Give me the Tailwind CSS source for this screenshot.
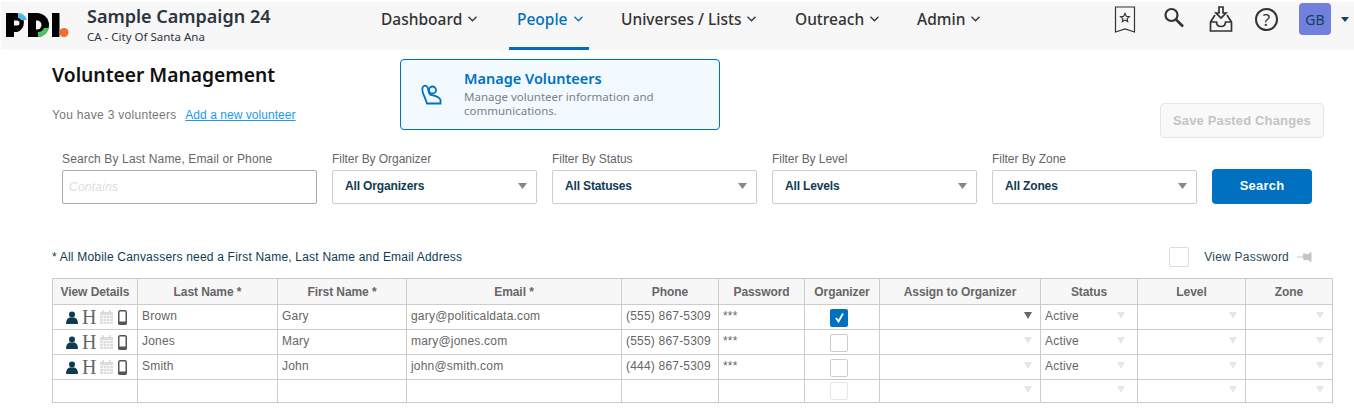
<!doctype html>
<html lang="en"><head><meta charset="utf-8"><title>Volunteer Management</title>
<script src="https://cdn.jsdelivr.net/npm/@tailwindcss/browser@4"></script></head>
<body class="bg-white overflow-hidden h-[408px] w-[1354px] font-['Liberation_Sans',Arial,sans-serif] text-[12px] text-[#666]">
<div class="pt-[2px]">
<header class="ml-[1px] h-[48px] bg-[#f7f7f7] flex items-start relative">
  <svg class="absolute left-[5px] top-[11px]" width="64" height="25" viewBox="0 0 64 25">
    <path d="M0 0h11a10 10 0 0 1 0 19H8v5H0z" fill="#000"/><path d="M12 0a10 10 0 0 1 9 7h-6a3.500 3.500 0 0 0-3-2z" fill="#4db8f0"/><path d="M8 7.500h3a2.500 2.500 0 0 1 0 5H8z" fill="#f7f7f7"/>
    <path d="M22 0h9a12 12 0 0 1 0 24h-9z" fill="#000"/><path d="M32 24a12 12 0 0 0 11-9h-5a7 7 0 0 1-6 4z" fill="#4cc464"/><path d="M30 7.500h1a4.500 4.500 0 0 1 0 9h-1z" fill="#f7f7f7"/>
    <rect x="46" y="0" width="7.500" height="24" fill="#000"/><circle cx="58" cy="19.500" r="4.500" fill="#f26b2a"/>
  </svg>
  <div class="ml-[86px] mt-[3px] w-[294px] font-['Noto_Sans',sans-serif] text-[#2b3440]">
    <div class="text-[18px] leading-[22px] font-semibold whitespace-nowrap">Sample Campaign 24</div>
    <div class="text-[11.500px] leading-[15px] mt-[2px] whitespace-nowrap">CA - City Of Santa Ana</div>
  </div>
  <nav class="flex items-start font-['Noto_Sans',sans-serif] text-[15.500px] text-[#333] font-medium">
    <a class="w-[136px] mt-[5px] leading-[24px] flex items-center gap-[6px]">Dashboard <svg width="9" height="6" viewBox="0 0 9 6" fill="none" stroke="currentColor" stroke-width="1.300"><path d="M.5 .8 4.500 4.800 8.500 .8"/></svg></a>
    <div class="w-[80px] -ml-[8px] mr-[32px] pl-[8px] h-[48px] border-b-[3px] border-[#0070c0] text-[#0070c0]"><a class="mt-[5px] leading-[24px] flex items-center gap-[6px] whitespace-nowrap">People <svg width="9" height="6" viewBox="0 0 9 6" fill="none" stroke="currentColor" stroke-width="1.300"><path d="M.5 .8 4.500 4.800 8.500 .8"/></svg></a></div>
    <a class="w-[174px] mt-[5px] leading-[24px] flex items-center gap-[6px]">Universes / Lists <svg width="9" height="6" viewBox="0 0 9 6" fill="none" stroke="currentColor" stroke-width="1.300"><path d="M.5 .8 4.500 4.800 8.500 .8"/></svg></a>
    <a class="w-[122px] mt-[5px] leading-[24px] flex items-center gap-[6px]">Outreach <svg width="9" height="6" viewBox="0 0 9 6" fill="none" stroke="currentColor" stroke-width="1.300"><path d="M.5 .8 4.500 4.800 8.500 .8"/></svg></a>
    <a class="w-[80px] mt-[5px] leading-[24px] flex items-center gap-[6px]">Admin <svg width="9" height="6" viewBox="0 0 9 6" fill="none" stroke="currentColor" stroke-width="1.300"><path d="M.5 .8 4.500 4.800 8.500 .8"/></svg></a>
  </nav>
  <div class="ml-auto mr-[4px] flex items-start">
    <svg class="mt-[4px]" width="22" height="28" viewBox="0 0 22 28" fill="none" stroke="#333" stroke-width="1.200"><path d="M1.500 1h19v25l-9.500-3-9.500 3z"/><path d="M11 7.500l1.300 2.800 3 .3-2.200 2 .6 3-2.700-1.500-2.700 1.500.6-3-2.200-2 3-.3z"/></svg>
    <svg class="ml-[27px] mt-[5px]" width="22" height="22" viewBox="0 0 22 22" fill="none" stroke="#333" stroke-width="2.200"><circle cx="8.500" cy="8" r="6"/><path d="M13 12.500l7 7" stroke-width="2.600"/></svg>
    <svg class="ml-[24px] mt-[4px]" width="24" height="27" viewBox="0 0 24 27" fill="none" stroke="#333" stroke-width="1.700"><path d="M10 1h4v6h3l-5 5-5-5h3z"/><path d="M6 9 1.500 16v9h21v-9L18 9"/><path d="M1.500 16h6c0 3 2 4.500 4.500 4.500s4.500-1.500 4.500-4.500h6"/></svg>
    <div class="ml-[22px] mt-[6px] w-[23px] h-[23px] rounded-full border-2 border-[#333] flex items-center justify-center text-[17px] leading-none text-[#333] font-['Noto_Sans',sans-serif]">?</div>
    <div class="ml-[21px] mt-[1px] w-[32px] h-[32px] rounded-[4px] bg-[#7080dc] text-[#14405a] text-[14px] flex items-center justify-center font-['Noto_Sans',sans-serif]">GB</div>
    <svg class="ml-[10px] mt-[15px] mr-[1px]" width="8" height="5" viewBox="0 0 8 5"><path d="M0 0h8L4 5z" fill="#14405a"/></svg>
  </div>
</header>
<section class="h-[95px] flex items-start relative">
  <div class="ml-[52px] w-[348px] pt-[12px]">
    <h1 class="font-['Noto_Sans',sans-serif] text-[19.250px] leading-[26px] font-semibold text-[#111] whitespace-nowrap">Volunteer Management</h1>
    <p class="mt-[20px] leading-[14px] whitespace-nowrap tracking-[.3px] text-[#777]">You have 3 volunteers <a class="ml-[5px] text-[#1a9af0] underline tracking-[.05px]">Add a new volunteer</a></p>
  </div>
  <div class="mt-[9px] w-[320px] h-[71px] rounded-[4px] border border-[#0070c0] bg-[#f3faff] flex font-['Noto_Sans',sans-serif]">
    <svg class="ml-[18px] mt-[22px] shrink-0" width="24" height="24" viewBox="0 0 24 24" fill="none" stroke="#0070c0" stroke-width="1.800"><circle cx="13.500" cy="8" r="3.500"/><path d="M5 4C3 5 3 8 4 11C5 14 6.500 17 8 21.500H21.500V18C20 14 15 13.500 12 13C9.500 12.500 9.500 9 9 6.500C8.500 4 6.500 3 5 4z"/></svg>
    <div class="ml-[21px] pt-[7px]">
      <div class="text-[14.500px] leading-[22px] font-semibold text-[#0070c0]">Manage Volunteers</div>
      <div class="text-[11.500px] leading-[14px] text-[#7a7f87] mt-[1px] w-[210px]">Manage volunteer information and communications.</div>
    </div>
  </div>
  <button class="ml-[440px] mt-[53px] w-[164px] h-[35px] rounded-[4px] border border-[#e6e6e6] bg-[#f9f9f9] text-[#c4c4c4] text-[13px] font-bold tracking-[.15px] whitespace-nowrap">Save Pasted Changes</button>
</section>
<section class="flex items-end ml-[62px] gap-[15px] h-[59px]">
  <label class="w-[255px] block"><span class="block leading-[14px] mb-[4px] tracking-[.14px] whitespace-nowrap">Search By Last Name, Email or Phone</span>
    <div class="h-[34px] border border-[#aaa] rounded-[2px] pl-[6px] flex items-center italic text-[#ddd] tracking-[.25px]">Contains</div></label>
  <label class="w-[205px] block"><span class="block leading-[14px] mb-[4px] tracking-[-.05px]">Filter By Organizer</span>
    <div class="h-[34px] border border-[#c8ced8] rounded-[2px] pl-[12px] pr-[9px] pb-[2px] flex items-center justify-between font-bold text-[#0f3b52] tracking-[-.15px]"><span>All Organizers</span><svg width="9" height="6" viewBox="0 0 9 6"><path d="M0 0h9L4.500 6z" fill="#888"/></svg></div></label>
  <label class="w-[205px] block"><span class="block leading-[14px] mb-[4px] tracking-[-.05px]">Filter By Status</span>
    <div class="h-[34px] border border-[#c8ced8] rounded-[2px] pl-[12px] pr-[9px] pb-[2px] flex items-center justify-between font-bold text-[#0f3b52] tracking-[-.15px]"><span>All Statuses</span><svg width="9" height="6" viewBox="0 0 9 6"><path d="M0 0h9L4.500 6z" fill="#888"/></svg></div></label>
  <label class="w-[205px] block"><span class="block leading-[14px] mb-[4px] tracking-[-.05px]">Filter By Level</span>
    <div class="h-[34px] border border-[#c8ced8] rounded-[2px] pl-[12px] pr-[9px] pb-[2px] flex items-center justify-between font-bold text-[#0f3b52] tracking-[-.15px]"><span>All Levels</span><svg width="9" height="6" viewBox="0 0 9 6"><path d="M0 0h9L4.500 6z" fill="#888"/></svg></div></label>
  <label class="w-[205px] block"><span class="block leading-[14px] mb-[4px] tracking-[-.05px]">Filter By Zone</span>
    <div class="h-[34px] border border-[#c8ced8] rounded-[2px] pl-[12px] pr-[9px] pb-[2px] flex items-center justify-between font-bold text-[#0f3b52] tracking-[-.15px]"><span>All Zones</span><svg width="9" height="6" viewBox="0 0 9 6"><path d="M0 0h9L4.500 6z" fill="#888"/></svg></div></label>
  <button class="w-[100px] h-[35px] rounded-[4px] bg-[#0070c0] text-white text-[13px] font-bold tracking-[.2px] pb-[1px]">Search</button>
</section>
<section class="ml-[52px] w-[1280px] h-[74px] flex items-start pt-[44px] relative">
  <span class="leading-[18px] text-[#0f3b52] tracking-[.2px] whitespace-nowrap">* All Mobile Canvassers need a First Name, Last Name and Email Address</span>
  <div class="ml-auto flex items-center -mt-[1px]">
    <span class="w-[20px] h-[20px] border border-[#ddd] rounded-[2px] bg-white"></span>
    <span class="ml-[15px] text-[#2c4a5c] tracking-[.22px]">View Password</span>
    <svg class="ml-[8px] mr-[20px]" width="15" height="12" viewBox="0 0 15 12"><path d="M0 5.500h6V3l2-1v1h4V1.500h2.500v9H12V9H8v1L6 8V6.500H0z" fill="#c4c4c4"/></svg>
  </div>
</section>
<table class="ml-[52px] border-collapse table-fixed w-[1280px] text-[12px] tracking-[.2px]">
  <colgroup><col class="w-[85px]"><col class="w-[140px]"><col class="w-[129px]"><col class="w-[215px]"><col class="w-[97px]"><col class="w-[86px]"><col class="w-[75px]"><col class="w-[161px]"><col class="w-[97px]"><col class="w-[108px]"><col class="w-[87px]"></colgroup>
  <thead><tr class="h-[26px] bg-[#f7f7f7] font-bold tracking-[-.08px]">
    <th class="border border-[#ccc] font-bold">View Details</th><th class="border border-[#ccc] font-bold">Last Name *</th><th class="border border-[#ccc] font-bold">First Name *</th><th class="border border-[#ccc] font-bold">Email *</th><th class="border border-[#ccc] font-bold">Phone</th><th class="border border-[#ccc] font-bold">Password</th><th class="border border-[#ccc] font-bold">Organizer</th><th class="border border-[#ccc] font-bold">Assign to Organizer</th><th class="border border-[#ccc] font-bold">Status</th><th class="border border-[#ccc] font-bold">Level</th><th class="border border-[#ccc] font-bold">Zone</th>
  </tr></thead>
  <tbody>
    <tr class="h-[25px]">
      <td class="border border-[#ccc] p-0"><div class="flex items-center pl-[13px] gap-[4px] h-[24px]">
        <svg width="12" height="13" viewBox="0 0 12 13"><circle cx="6" cy="3.500" r="3" fill="#0f3b52"/><path d="M0 13c0-4 1.500-6 3.500-6.500h5C10.500 7 12 9 12 13z" fill="#0f3b52"/></svg>
        <span class="font-['Liberation_Serif',serif] text-[20px] leading-none text-[#666] tracking-normal">H</span>
        <svg width="13" height="14" viewBox="0 0 13 14"><path d="M0 2h13v12H0z" fill="#ddd"/><path d="M0 5.500h13M0 8.500h13M0 11.500h13M3.500 5v9M6.500 5v9M9.500 5v9" stroke="#f4f4f4" stroke-width="1"/><path d="M3 0v3M10 0v3" stroke="#ccc" stroke-width="1.200"/></svg>
        <svg class="ml-[1px]" width="9" height="15" viewBox="0 0 9 15"><rect x=".75" y=".75" width="7.500" height="13.500" rx="1.500" fill="#fff" stroke="#555" stroke-width="1.500"/><rect x="0" y="11.500" width="9" height="3" rx="1" fill="#555"/></svg>
      </div></td>
      <td class="border border-[#ccc] pl-[4px] pb-[3px]">Brown</td><td class="border border-[#ccc] pl-[4px] pb-[3px]">Gary</td><td class="border border-[#ccc] pl-[4px] pb-[3px]">gary@politicaldata.com</td><td class="border border-[#ccc] pl-[4px] pb-[3px]">(555) 867-5309</td><td class="border border-[#ccc] pl-[4px] pb-[3px]">***</td>
      <td class="border border-[#ccc] p-0"><div class="ml-[25px] mt-[1px] w-[18px] h-[18px] rounded-[2px] bg-[#0070c0] flex items-center justify-center"><svg width="11" height="11" viewBox="0 0 11 11" fill="none" stroke="#fff" stroke-width="1.800"><path d="M2 6l2.500 3.500L9 1.500"/></svg></div></td>
      <td class="border border-[#ccc] p-0"><div class="flex justify-end pr-[8px] pb-[3px]"><svg width="8" height="7" viewBox="0 0 8 7"><path d="M0 0h8L4 7z" fill="#666"/></svg></div></td>
      <td class="border border-[#ccc] p-0 pl-[4px]"><div class="flex items-center justify-between pr-[12px] pb-[3px]"><span>Active</span><svg width="8" height="7" viewBox="0 0 8 7"><path d="M0 0h8L4 7z" fill="#e6e6e6"/></svg></div></td>
      <td class="border border-[#ccc] p-0"><div class="flex justify-end pr-[8px] pb-[3px]"><svg width="8" height="7" viewBox="0 0 8 7"><path d="M0 0h8L4 7z" fill="#e6e6e6"/></svg></div></td>
      <td class="border border-[#ccc] p-0"><div class="flex justify-end pr-[8px] pb-[3px]"><svg width="8" height="7" viewBox="0 0 8 7"><path d="M0 0h8L4 7z" fill="#e6e6e6"/></svg></div></td>
    </tr>
    <tr class="h-[25px]">
      <td class="border border-[#ccc] p-0"><div class="flex items-center pl-[13px] gap-[4px] h-[24px]">
        <svg width="12" height="13" viewBox="0 0 12 13"><circle cx="6" cy="3.500" r="3" fill="#0f3b52"/><path d="M0 13c0-4 1.500-6 3.500-6.500h5C10.500 7 12 9 12 13z" fill="#0f3b52"/></svg>
        <span class="font-['Liberation_Serif',serif] text-[20px] leading-none text-[#666] tracking-normal">H</span>
        <svg width="13" height="14" viewBox="0 0 13 14"><path d="M0 2h13v12H0z" fill="#ddd"/><path d="M0 5.500h13M0 8.500h13M0 11.500h13M3.500 5v9M6.500 5v9M9.500 5v9" stroke="#f4f4f4" stroke-width="1"/><path d="M3 0v3M10 0v3" stroke="#ccc" stroke-width="1.200"/></svg>
        <svg class="ml-[1px]" width="9" height="15" viewBox="0 0 9 15"><rect x=".75" y=".75" width="7.500" height="13.500" rx="1.500" fill="#fff" stroke="#555" stroke-width="1.500"/><rect x="0" y="11.500" width="9" height="3" rx="1" fill="#555"/></svg>
      </div></td>
      <td class="border border-[#ccc] pl-[4px] pb-[3px]">Jones</td><td class="border border-[#ccc] pl-[4px] pb-[3px]">Mary</td><td class="border border-[#ccc] pl-[4px] pb-[3px]">mary@jones.com</td><td class="border border-[#ccc] pl-[4px] pb-[3px]">(555) 867-5309</td><td class="border border-[#ccc] pl-[4px] pb-[3px]">***</td>
      <td class="border border-[#ccc] p-0"><div class="ml-[25px] mt-[1px] w-[18px] h-[18px] rounded-[2px] border border-[#ccc] bg-white"></div></td>
      <td class="border border-[#ccc] p-0"><div class="flex justify-end pr-[8px] pb-[3px]"><svg width="8" height="7" viewBox="0 0 8 7"><path d="M0 0h8L4 7z" fill="#e6e6e6"/></svg></div></td>
      <td class="border border-[#ccc] p-0 pl-[4px]"><div class="flex items-center justify-between pr-[12px] pb-[3px]"><span>Active</span><svg width="8" height="7" viewBox="0 0 8 7"><path d="M0 0h8L4 7z" fill="#e6e6e6"/></svg></div></td>
      <td class="border border-[#ccc] p-0"><div class="flex justify-end pr-[8px] pb-[3px]"><svg width="8" height="7" viewBox="0 0 8 7"><path d="M0 0h8L4 7z" fill="#e6e6e6"/></svg></div></td>
      <td class="border border-[#ccc] p-0"><div class="flex justify-end pr-[8px] pb-[3px]"><svg width="8" height="7" viewBox="0 0 8 7"><path d="M0 0h8L4 7z" fill="#e6e6e6"/></svg></div></td>
    </tr>
    <tr class="h-[25px]">
      <td class="border border-[#ccc] p-0"><div class="flex items-center pl-[13px] gap-[4px] h-[24px]">
        <svg width="12" height="13" viewBox="0 0 12 13"><circle cx="6" cy="3.500" r="3" fill="#0f3b52"/><path d="M0 13c0-4 1.500-6 3.500-6.500h5C10.500 7 12 9 12 13z" fill="#0f3b52"/></svg>
        <span class="font-['Liberation_Serif',serif] text-[20px] leading-none text-[#666] tracking-normal">H</span>
        <svg width="13" height="14" viewBox="0 0 13 14"><path d="M0 2h13v12H0z" fill="#ddd"/><path d="M0 5.500h13M0 8.500h13M0 11.500h13M3.500 5v9M6.500 5v9M9.500 5v9" stroke="#f4f4f4" stroke-width="1"/><path d="M3 0v3M10 0v3" stroke="#ccc" stroke-width="1.200"/></svg>
        <svg class="ml-[1px]" width="9" height="15" viewBox="0 0 9 15"><rect x=".75" y=".75" width="7.500" height="13.500" rx="1.500" fill="#fff" stroke="#555" stroke-width="1.500"/><rect x="0" y="11.500" width="9" height="3" rx="1" fill="#555"/></svg>
      </div></td>
      <td class="border border-[#ccc] pl-[4px] pb-[3px]">Smith</td><td class="border border-[#ccc] pl-[4px] pb-[3px]">John</td><td class="border border-[#ccc] pl-[4px] pb-[3px]">john@smith.com</td><td class="border border-[#ccc] pl-[4px] pb-[3px]">(444) 867-5309</td><td class="border border-[#ccc] pl-[4px] pb-[3px]">***</td>
      <td class="border border-[#ccc] p-0"><div class="ml-[25px] mt-[1px] w-[18px] h-[18px] rounded-[2px] border border-[#ccc] bg-white"></div></td>
      <td class="border border-[#ccc] p-0"><div class="flex justify-end pr-[8px] pb-[3px]"><svg width="8" height="7" viewBox="0 0 8 7"><path d="M0 0h8L4 7z" fill="#e6e6e6"/></svg></div></td>
      <td class="border border-[#ccc] p-0 pl-[4px]"><div class="flex items-center justify-between pr-[12px] pb-[3px]"><span>Active</span><svg width="8" height="7" viewBox="0 0 8 7"><path d="M0 0h8L4 7z" fill="#e6e6e6"/></svg></div></td>
      <td class="border border-[#ccc] p-0"><div class="flex justify-end pr-[8px] pb-[3px]"><svg width="8" height="7" viewBox="0 0 8 7"><path d="M0 0h8L4 7z" fill="#e6e6e6"/></svg></div></td>
      <td class="border border-[#ccc] p-0"><div class="flex justify-end pr-[8px] pb-[3px]"><svg width="8" height="7" viewBox="0 0 8 7"><path d="M0 0h8L4 7z" fill="#e6e6e6"/></svg></div></td>
    </tr>
    <tr class="h-[23px]">
      <td class="border border-[#ccc] p-0"></td><td class="border border-[#ccc] p-0"></td><td class="border border-[#ccc] p-0"></td><td class="border border-[#ccc] p-0"></td><td class="border border-[#ccc] p-0"></td><td class="border border-[#ccc] p-0"></td>
      <td class="border border-[#ccc] p-0"><div class="ml-[25px] w-[18px] h-[18px] rounded-[2px] border border-[#e6e6e6] bg-white"></div></td>
      <td class="border border-[#ccc] p-0"><div class="flex justify-end pr-[8px] pb-[3px]"><svg width="8" height="7" viewBox="0 0 8 7"><path d="M0 0h8L4 7z" fill="#e6e6e6"/></svg></div></td>
      <td class="border border-[#ccc] p-0"><div class="flex justify-end pr-[12px] pb-[3px]"><svg width="8" height="7" viewBox="0 0 8 7"><path d="M0 0h8L4 7z" fill="#e6e6e6"/></svg></div></td>
      <td class="border border-[#ccc] p-0"><div class="flex justify-end pr-[8px] pb-[3px]"><svg width="8" height="7" viewBox="0 0 8 7"><path d="M0 0h8L4 7z" fill="#e6e6e6"/></svg></div></td>
      <td class="border border-[#ccc] p-0"><div class="flex justify-end pr-[8px] pb-[3px]"><svg width="8" height="7" viewBox="0 0 8 7"><path d="M0 0h8L4 7z" fill="#e6e6e6"/></svg></div></td>
    </tr>
  </tbody>
</table>
</div>
</body></html>
